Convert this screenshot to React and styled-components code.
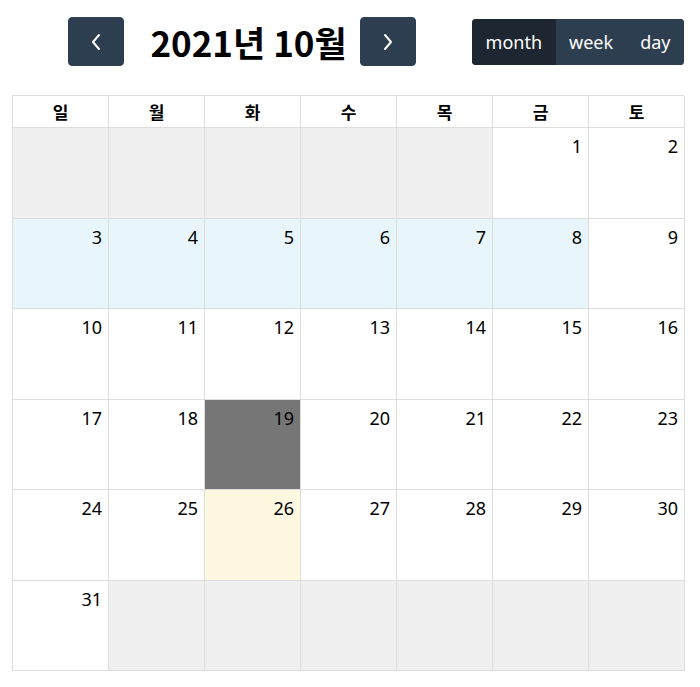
import styled, { createGlobalStyle } from "styled-components";

const GlobalStyle = createGlobalStyle`
  body {
    margin: 0;
    background: #fff;
    font-family: "Noto Sans", "Noto Sans CJK KR", sans-serif;
    color: #000;
  }
`;

const days = ["일", "월", "화", "수", "목", "금", "토"];

// October 2021 starts on Friday
const buildWeeks = () => {
  const cells = [];
  for (let i = 0; i < 5; i++) cells.push({ day: null });
  for (let d = 1; d <= 31; d++) cells.push({ day: d });
  while (cells.length < 42) cells.push({ day: null });
  const weeks = [];
  for (let i = 0; i < 6; i++) weeks.push(cells.slice(i * 7, i * 7 + 7));
  return weeks;
};

const cellTone = (day) => {
  if (day === null) return "other";
  if (day >= 3 && day <= 8) return "week";
  if (day === 19) return "selected";
  if (day === 26) return "today";
  return "normal";
};

const tones = {
  other: "#f0f0f0",
  week: "#e8f6fb",
  selected: "#767676",
  today: "#fef8e0",
  normal: "#fff",
};

const ChevronLeft = () => (
  <svg width="14" height="20" viewBox="0 0 14 20" fill="none">
    <path d="M10 3 L4 10 L10 17" stroke="#fff" strokeWidth="2" strokeLinecap="round" strokeLinejoin="round" />
  </svg>
);

const ChevronRight = () => (
  <svg width="14" height="20" viewBox="0 0 14 20" fill="none">
    <path d="M4 3 L10 10 L4 17" stroke="#fff" strokeWidth="2" strokeLinecap="round" strokeLinejoin="round" />
  </svg>
);

const App = () => {
  const weeks = buildWeeks();
  return (
    <Page>
      <GlobalStyle />
      <Toolbar>
        <Section />
        <Section>
          <NavButton>
            <ChevronLeft />
          </NavButton>
          <Title>2021년 10월</Title>
          <NavButton>
            <ChevronRight />
          </NavButton>
        </Section>
        <ButtonGroup>
          <ViewButton $active>month</ViewButton>
          <ViewButton>week</ViewButton>
          <ViewButton>day</ViewButton>
        </ButtonGroup>
      </Toolbar>
      <Grid>
        {days.map((d) => (
          <HeaderCell key={d}>{d}</HeaderCell>
        ))}
        {weeks.map((week, wi) =>
          week.map((c, ci) => (
            <DayCell key={`${wi}-${ci}`} $tone={cellTone(c.day)}>
              {c.day !== null && <DayNumber>{c.day}</DayNumber>}
            </DayCell>
          ))
        )}
      </Grid>
    </Page>
  );
};

export default App;

const Page = styled.div`
  padding: 17px 16px 0 12px;
`;

const Toolbar = styled.div`
  display: flex;
  justify-content: space-between;
  align-items: center;
  height: 49px;
  margin-bottom: 29px;
`;

const Section = styled.div`
  display: flex;
  align-items: center;
`;

const NavButton = styled.button`
  width: 56px;
  height: 49px;
  display: flex;
  align-items: center;
  justify-content: center;
  background: #2c3e50;
  border: 1px solid #2c3e50;
  border-radius: 4px;
  padding: 0;
`;

const Title = styled.h2`
  margin: 0 13px 0 26px;
  font-family: "Noto Sans CJK KR", "Noto Sans", sans-serif;
  font-size: 35px;
  font-weight: 700;
  line-height: 1;
`;

const ButtonGroup = styled.div`
  display: flex;
  height: 46px;
  border-radius: 4px;
  overflow: hidden;
  background: #2c3e50;
`;

const ViewButton = styled.button`
  border: none;
  background: ${(p) => (p.$active ? "#1e2731" : "#2c3e50")};
  color: #fff;
  font-family: "Noto Sans", sans-serif;
  font-size: 18px;
  padding: 0 13.5px;
  height: 100%;
`;

const Grid = styled.div`
  display: grid;
  grid-template-columns: repeat(7, 96px);
  grid-template-rows: 32px repeat(6, 90.5px);
  border-top: 1px solid #ddd;
  border-left: 1px solid #ddd;
  width: 672px;
  box-sizing: border-box;
`;

const HeaderCell = styled.div`
  border-right: 1px solid #ddd;
  border-bottom: 1px solid #ddd;
  display: flex;
  align-items: center;
  justify-content: center;
  font-family: "Noto Sans CJK KR", sans-serif;
  font-size: 17px;
  font-weight: 700;
`;

const DayCell = styled.div`
  border-right: 1px solid #ddd;
  border-bottom: 1px solid #ddd;
  background: ${(p) => tones[p.$tone]};
  display: flex;
  justify-content: flex-end;
  align-items: flex-start;
  padding: 7px 6px 0 0;
`;

const DayNumber = styled.span`
  font-family: "Noto Sans", sans-serif;
  font-size: 18px;
  line-height: 1.3;
`;
